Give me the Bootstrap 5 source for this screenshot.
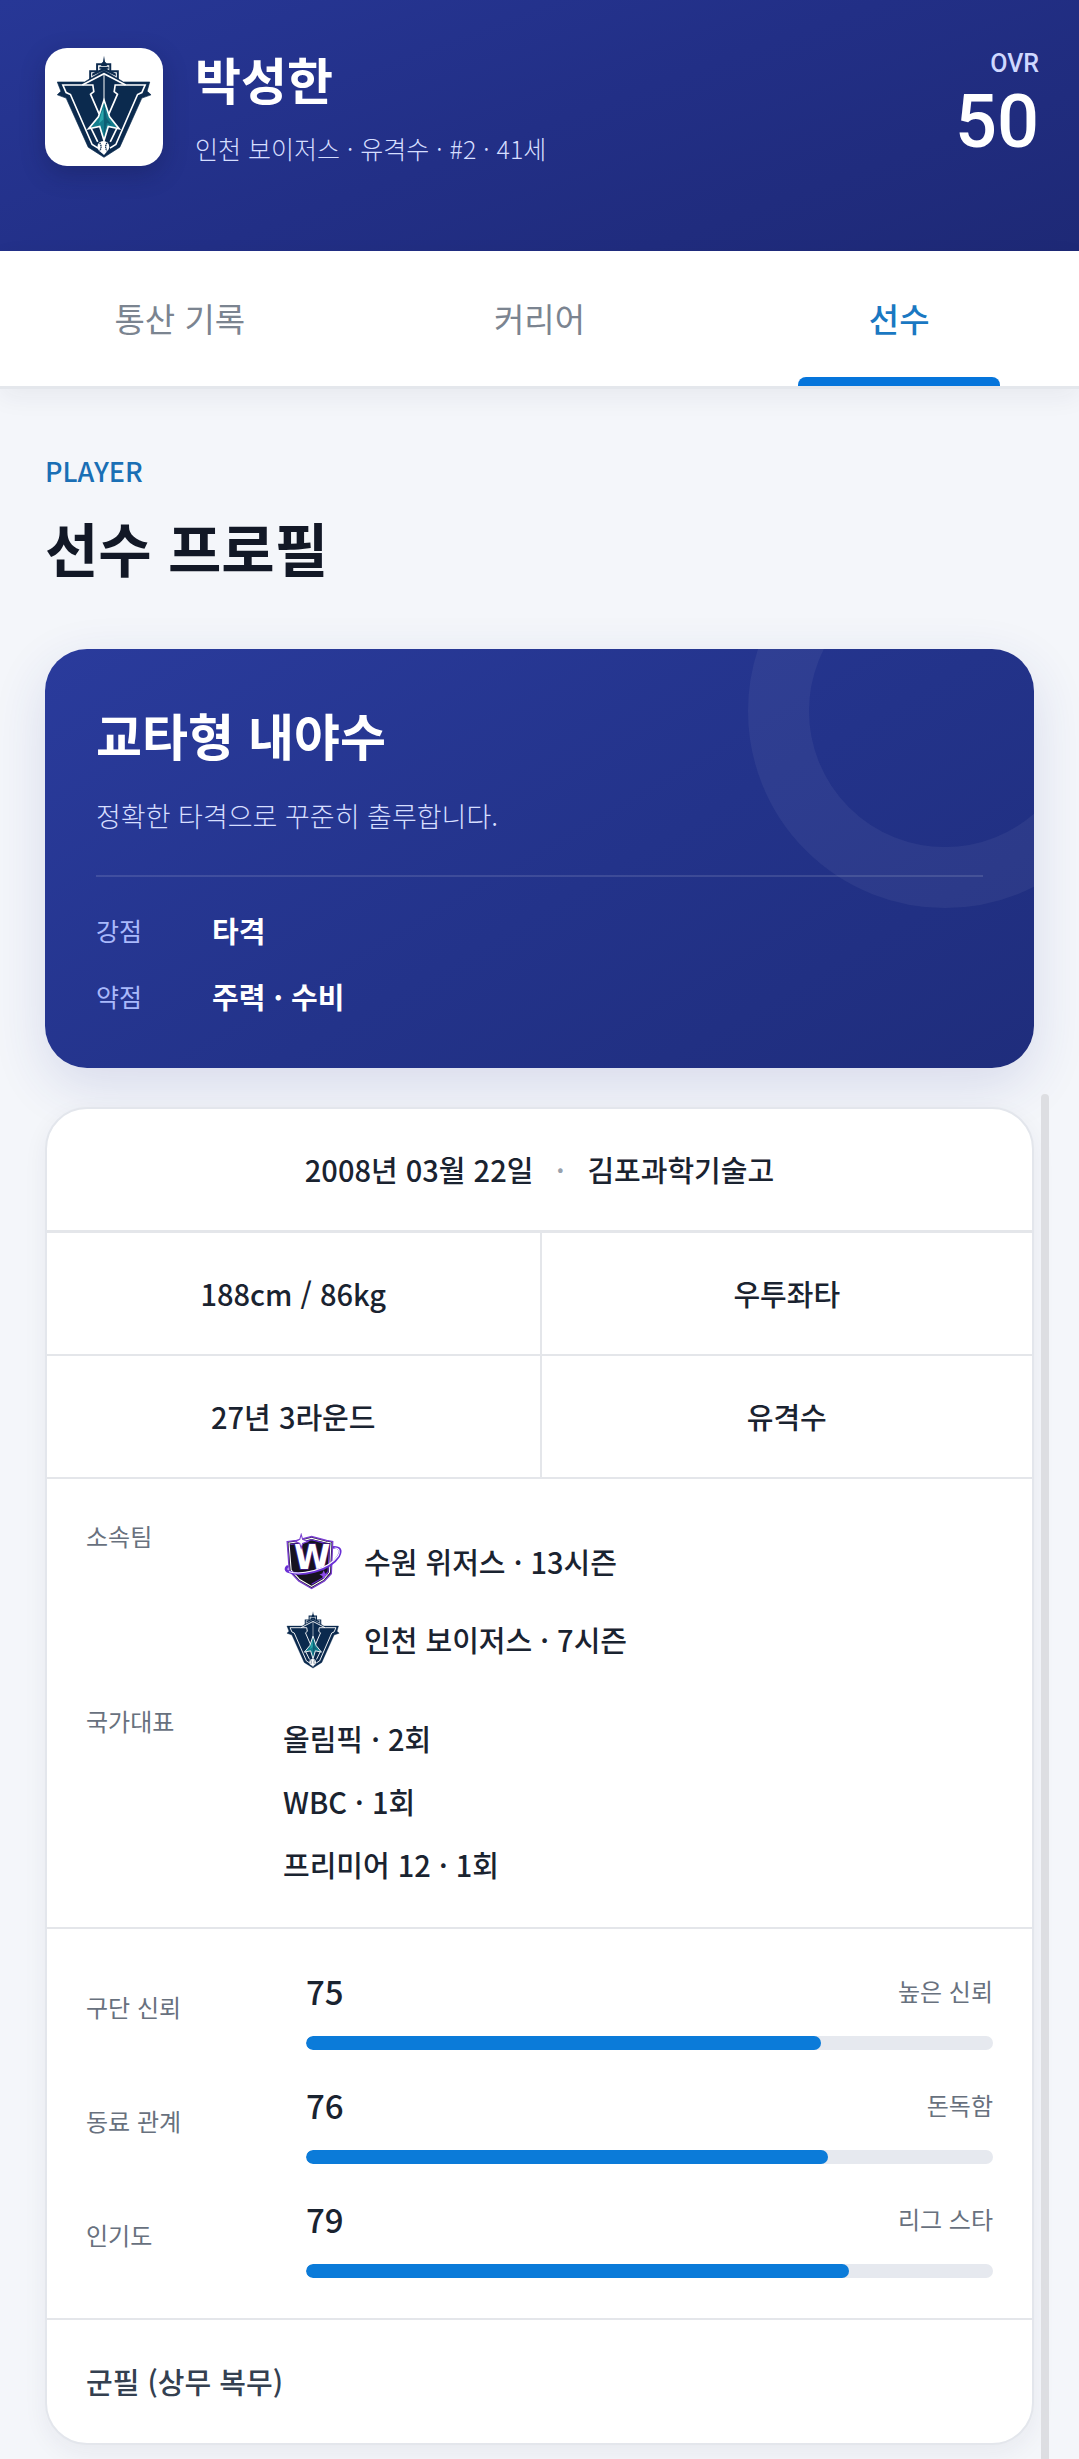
<!DOCTYPE html>
<html lang="ko">
<head>
<meta charset="utf-8">
<meta name="viewport" content="width=device-width, initial-scale=1">
<title>선수 프로필</title>
<link rel="stylesheet" href="https://cdn.jsdelivr.net/npm/bootstrap@5.3.0/dist/css/bootstrap.min.css">
<style>
  body { background: #f4f6fa; color: #1a2330; font-family: "Noto Sans CJK KR", sans-serif; }
  .hero { background: linear-gradient(160deg, #273796 0%, #222f86 50%, #1e2976 100%); color: #fff; padding: 48px 40px 85px 45px; }
  .team-tile { width: 118px; height: 118px; border-radius: 22px; background: #fff; box-shadow: 0 8px 24px rgba(15, 20, 60, .3); }
  .team-tile svg { width: 100px; height: 106px; }
  .player-name { font-size: 50px; line-height: 60px; font-weight: 700; margin-bottom: 22px; }
  .player-meta { font-size: 25px; line-height: 36px; font-weight: 300; color: #d6deff; }
  .ovr-label { font-family: Roboto, sans-serif; font-size: 25px; line-height: 32px; font-weight: 500; color: #cfd8ff; }
  .ovr-value { font-family: Roboto, sans-serif; font-size: 74px; line-height: 84px; font-weight: 500; }
  .tabs { background: #fff; border-bottom: 3px solid #e4e7ec; box-shadow: 0 8px 24px rgba(30, 40, 70, .06); }
  .tabs .nav-link { position: relative; padding: 0; font-size: 33px; line-height: 135px; font-weight: 400; color: #7b8490; border-radius: 0; }
  .tabs .nav-link.active { color: #1a78c2; font-weight: 500; }
  .tabs .nav-link.active::after { content: ""; position: absolute; left: 22%; right: 22%; bottom: 0; height: 9px; border-radius: 8px 8px 0 0; background: #0575db; }
  .page-body { padding: 64px 45px 16px; }
  .eyebrow { font-size: 27px; line-height: 36px; font-weight: 500; color: #1a6fb5; }
  .page-title { font-size: 58px; line-height: 84px; font-weight: 700; color: #121826; margin-bottom: 60px; }
  .type-card { position: relative; overflow: hidden; border-radius: 42px; padding: 47px 51px 39px; color: #fff; background: linear-gradient(150deg, #2a3b9c 0%, #23338a 55%, #1f2d7c 100%); }
  .type-wrap { border-radius: 42px; box-shadow: 0 18px 54px rgba(39, 55, 150, .14); margin-bottom: 39px; }
  .type-card::before { content: ""; position: absolute; width: 394px; height: 394px; top: -135px; right: -108px; border: 61px solid rgba(255, 255, 255, .05); border-radius: 50%; }
  .type-title { font-size: 50px; line-height: 76px; font-weight: 700; margin-bottom: 24px; }
  .type-desc { font-size: 27px; line-height: 40px; font-weight: 300; color: #d6deff; margin-bottom: 39px; }
  .type-traits { border-top: 2px solid rgba(255, 255, 255, .12); padding-top: 20px; margin: 0; }
  .trait-line { line-height: 66px; }
  .trait-line dt { width: 116px; font-size: 25px; font-weight: 400; color: #a9b9fb; }
  .trait-line dd { margin: 0; font-size: 29px; font-weight: 700; }
  .profile { border: 2px solid #e3e6ec; border-radius: 42px; background: #fff; overflow: hidden; box-shadow: 0 8px 24px rgba(30, 40, 70, .06); font-size: 29px; font-weight: 500; }
  .profile-cell { line-height: 121px; text-align: center; border-top: 2px solid #e4e6ea; }
  .profile-cell + .profile-cell { border-left: 2px solid #e4e6ea; }
  .profile-birth { line-height: 121px; }
  .profile-birth .sep { color: #98a1ad; width: 54px; text-align: center; }
  .profile-grid { border-top: 1px solid #e4e6ea; }
  .profile-part { border-top: 2px solid #e4e6ea; padding: 40px 39px; }
  .soft-label { font-size: 24px; line-height: 34px; font-weight: 400; color: #68717e; }
  .history { gap: 25px; margin: 0; }
  .history dt { width: 197px; }
  .history dd { margin: 0; }
  .history .teams { padding-top: 4px; }
  .history .nations { padding-top: 3px; margin-bottom: -9px; }
  .team-line { height: 78px; gap: 21px; }
  .team-line svg { width: 60px; height: 58px; }
  .nation-line { line-height: 63px; }
  .profile-part.meters { gap: 31px; padding-top: 38px; }
  .meters .soft-label.meter-name { width: 220px; padding-bottom: 4px; }
  .meter-value { font-size: 33px; line-height: 48px; }
  .meters .progress { height: 14px; border-radius: 7px; background: #e6e9ef; margin-top: 21px; }
  .meters .progress-bar { border-radius: 7px; background: #0b7bd9; }
  .service { color: #344050; line-height: 43px; }
  .scroll-thumb { position: absolute; width: 8px; top: 705px; bottom: 0; right: 30px; border-radius: 4px 4px 0 0; background: #dddee2; }
</style>
<script src="https://cdn.jsdelivr.net/npm/bootstrap@5.3.0/dist/js/bootstrap.bundle.min.js"></script>
</head>
<body>
<svg class="d-none" aria-hidden="true">
  <symbol id="voyagers" viewBox="72 70 304 316">
    <path fill="#fff" stroke="#0b2a4e" stroke-width="6" d="M182 146V119H203V98H217L224 92L231 98H243V119H266V146"/>
    <path fill="#0b2a4e" d="M224 72L228 96L234 103H214L220 96ZM210 106H238V112H210ZM188 126L224 108L260 126V134L224 116L188 134Z"/>
    <path fill="#0b2a4e" stroke="#0b2a4e" stroke-width="2" d="M82 152H165L224 116L283 152H363L355 180L367 191L339 201L272 350L224 381L176 350L109 201L82 191L93 180Z"/>
    <path fill="none" stroke="#fff" stroke-width="5" d="M158 161H99L109 184L122 190L188 342L206 353M290 161H349L339 184L326 190L260 342L242 353M158 161L224 127L290 161"/>
    <path fill="none" stroke="#fff" stroke-width="5" d="M158 161H190L193 181L183 189L209 249M290 161H258L255 181L265 189L239 249M185 293L205 334M263 293L243 334"/>
    <path stroke="#fff" stroke-width="3" d="M224 130V210"/>
    <path fill="#147d8d" stroke="#fff" stroke-width="5" d="M224 207L241 258L270 294L237 287L224 330L211 287L177 294L207 258Z"/>
    <path fill="#0d5f75" d="M224 216L232 262L247 282L233 276L224 318Z"/>
    <path fill="#2aa7ac" d="M216 247L222 234V266L208 278Z"/>
    <circle cx="222" cy="349" r="18" fill="#fff"/>
    <path fill="none" stroke="#0b2a4e" stroke-width="4" stroke-dasharray="4 2" d="M211 337Q219 349 211 361M233 337Q225 349 233 361"/>
    <path fill="#fff" d="M214 365H232L224 374Z"/>
  </symbol>
  <symbol id="wizards" viewBox="54 74 164 162">
    <path fill="#16131f" stroke="#7a3fd0" stroke-width="4" d="M64 98L90 95L132 84L174 95L191 98L187 188L168 208L132 229L96 208L70 180Z"/>
    <path fill="none" stroke="#fff" stroke-width="3" d="M69 102L92 99L132 89L172 99L186 102L182 184L165 204L132 223L99 204L75 178Z"/>
    <path fill="none" stroke="#6a2fd6" stroke-width="3" d="M73 106L94 103L132 93L170 103L182 106L178 182L162 200L132 217"/>
    <text x="134" y="174" text-anchor="middle" font-family="DejaVu Sans, sans-serif" font-weight="700" font-size="92" fill="#fff" stroke="#3b1a7a" stroke-width="5" paint-order="stroke">W</text>
    <path fill="none" stroke="#6a2fd6" stroke-width="8" stroke-linecap="round" d="M194 114Q220 114 208 138Q190 168 140 181Q92 194 65 181Q57 176 64 168"/>
    <path fill="none" stroke="#fff" stroke-width="3" stroke-linecap="round" d="M197 116Q216 117 206 138Q186 166 139 179Q94 191 70 182"/>
    <path fill="#fff" stroke="#7a3fd0" stroke-width="3" d="M103 78L107 92L122 98L107 103L103 116L99 103L87 98L99 92Z"/>
    <path fill="#8a4ae8" d="M166 178L170 187L178 190L170 194L166 204L162 194L154 190L162 187Z"/>
  </symbol>
</svg>

<header class="hero d-flex align-items-start justify-content-between">
  <div class="d-flex">
    <div class="team-tile d-flex align-items-center justify-content-center flex-shrink-0">
      <svg role="img" aria-label="인천 보이저스"><use href="#voyagers"/></svg>
    </div>
    <div class="ps-4 ms-2">
      <h1 class="player-name">박성한</h1>
      <p class="player-meta mb-0">인천 보이저스 · 유격수 · #2 · 41세</p>
    </div>
  </div>
  <div class="text-end">
    <div class="ovr-label">OVR</div>
    <div class="ovr-value">50</div>
  </div>
</header>

<nav class="tabs nav nav-fill flex-nowrap">
  <a class="nav-link w-100" href="#record">통산 기록</a>
  <a class="nav-link w-100" href="#career">커리어</a>
  <a class="nav-link w-100 active" href="#player" aria-current="page">선수</a>
</nav>

<main class="page-body position-relative" id="player">
  <div class="eyebrow">PLAYER</div>
  <h2 class="page-title mt-3">선수 프로필</h2>

  <div class="type-wrap">
    <section class="type-card">
      <h3 class="type-title">교타형 내야수</h3>
      <p class="type-desc">정확한 타격으로 꾸준히 출루합니다.</p>
      <dl class="type-traits">
        <div class="trait-line d-flex"><dt>강점</dt><dd>타격</dd></div>
        <div class="trait-line d-flex"><dt>약점</dt><dd>주력 · 수비</dd></div>
      </dl>
    </section>
  </div>

  <section class="profile">
    <div class="profile-birth d-flex justify-content-center"><span>2008년 03월 22일</span><span class="sep">·</span><span>김포과학기술고</span></div>
    <div class="profile-grid row g-0">
      <div class="profile-cell col-6">188cm / 86kg</div>
      <div class="profile-cell col-6">우투좌타</div>
    </div>
    <div class="row g-0">
      <div class="profile-cell col-6">27년 3라운드</div>
      <div class="profile-cell col-6">유격수</div>
    </div>
    <dl class="profile-part history d-flex flex-column">
      <div class="d-flex">
        <dt class="soft-label">소속팀</dt>
        <dd class="teams">
          <div class="team-line d-flex align-items-center"><svg aria-hidden="true"><use href="#wizards"/></svg>수원 위저스 · 13시즌</div>
          <div class="team-line d-flex align-items-center"><svg aria-hidden="true"><use href="#voyagers"/></svg>인천 보이저스 · 7시즌</div>
        </dd>
      </div>
      <div class="d-flex">
        <dt class="soft-label">국가대표</dt>
        <dd class="nations">
          <div class="nation-line">올림픽 · 2회</div>
          <div class="nation-line">WBC · 1회</div>
          <div class="nation-line">프리미어 12 · 1회</div>
        </dd>
      </div>
    </dl>
    <div class="profile-part meters d-flex flex-column">
      <div class="d-flex align-items-center">
        <span class="soft-label meter-name flex-shrink-0">구단 신뢰</span>
        <div class="flex-grow-1">
          <div class="d-flex justify-content-between align-items-center"><span class="meter-value">75</span><span class="soft-label text-end">높은 신뢰</span></div>
          <div class="progress" role="progressbar" aria-label="구단 신뢰" aria-valuenow="75" aria-valuemin="0" aria-valuemax="100"><div class="progress-bar" style="width:75%"></div></div>
        </div>
      </div>
      <div class="d-flex align-items-center">
        <span class="soft-label meter-name flex-shrink-0">동료 관계</span>
        <div class="flex-grow-1">
          <div class="d-flex justify-content-between align-items-center"><span class="meter-value">76</span><span class="soft-label text-end">돈독함</span></div>
          <div class="progress" role="progressbar" aria-label="동료 관계" aria-valuenow="76" aria-valuemin="0" aria-valuemax="100"><div class="progress-bar" style="width:76%"></div></div>
        </div>
      </div>
      <div class="d-flex align-items-center">
        <span class="soft-label meter-name flex-shrink-0">인기도</span>
        <div class="flex-grow-1">
          <div class="d-flex justify-content-between align-items-center"><span class="meter-value">79</span><span class="soft-label text-end">리그 스타</span></div>
          <div class="progress" role="progressbar" aria-label="인기도" aria-valuenow="79" aria-valuemin="0" aria-valuemax="100"><div class="progress-bar" style="width:79%"></div></div>
        </div>
      </div>
    </div>
    <div class="profile-part service">군필 (상무 복무)</div>
  </section>
  <div class="scroll-thumb"></div>
</main>
</body>
</html>
